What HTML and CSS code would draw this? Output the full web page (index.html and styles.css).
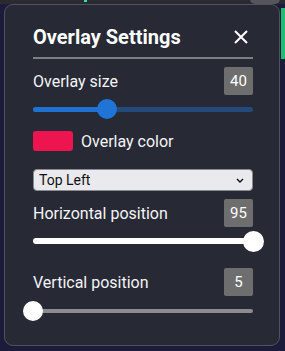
FILE: index.html
```html
<!DOCTYPE html>
<html>
<head>
<meta charset="utf-8">
<link rel="stylesheet" href="styles.css">
</head>
<body>
<div class="backdrop">
  <div class="top-strip"></div>
  <div class="top-dot"></div>
  <div class="top-pill"></div>
  <div class="side-green"></div>
</div>
<div class="panel">
  <div class="header">
    <h1 class="title">Overlay Settings</h1>
    <button class="close" aria-label="Close">
      <svg width="14" height="14" viewBox="0 0 14 14"><path d="M1 1L13 13M13 1L1 13" stroke="#fff" stroke-width="2" fill="none"/></svg>
    </button>
  </div>
  <div class="divider"></div>

  <div class="row row-first">
    <span class="label">Overlay size</span>
    <span class="badge">40</span>
  </div>
  <div class="slider slider-blue">
    <div class="track"></div>
    <div class="fill" style="width:33.6%"></div>
    <div class="thumb" style="left:33.6%"></div>
  </div>

  <div class="color-row">
    <span class="swatch"></span>
    <span class="label">Overlay color</span>
  </div>

  <div class="select">
    <span class="select-text">Top Left</span>
    <svg class="chev" width="8" height="5" viewBox="0 0 8 5"><path d="M1 1L4 4L7 1" stroke="#111" stroke-width="1.4" fill="none"/></svg>
  </div>

  <div class="row row-h">
    <span class="label">Horizontal position</span>
    <span class="badge">95</span>
  </div>
  <div class="slider slider-white">
    <div class="track"></div>
    <div class="thumb" style="left:100%"></div>
  </div>

  <div class="row row-v">
    <span class="label">Vertical position</span>
    <span class="badge">5</span>
  </div>
  <div class="slider slider-gray">
    <div class="track"></div>
    <div class="thumb" style="left:0%"></div>
  </div>
</div>
</body>
</html>
```

FILE: styles.css
```css
html, body {
  margin: 0;
  padding: 0;
}
body {
  background: #1c1b3a;
  width: 285px;
  height: 351px;
  overflow: hidden;
  position: relative;
  font-family: Roboto, "Noto Sans", Arial, sans-serif;
  color: #fff;
}
.backdrop {
  position: absolute;
  inset: 0;
}
.top-strip {
  position: absolute;
  left: 0;
  top: 0;
  width: 285px;
  height: 4px;
  background: #2a2a32;
}
.top-dot {
  position: absolute;
  left: 84px;
  top: 0;
  width: 3px;
  height: 2px;
  background: #3fe08a;
}
.top-pill {
  position: absolute;
  left: 250px;
  top: -6px;
  width: 30px;
  height: 10px;
  border-radius: 5px;
  background: #55555c;
}
.side-green {
  position: absolute;
  left: 281px;
  top: 8px;
  width: 4px;
  height: 51px;
  background: #1fbf72;
}
.panel {
  position: relative;
  margin: 4px 0 0 4px;
  width: 276px;
  height: 342px;
  box-sizing: border-box;
  background: #272935;
  border: 1px solid #50535f;
  border-radius: 9px;
  padding: 20px 26px 0 28px;
}
.header {
  display: flex;
  align-items: center;
  justify-content: space-between;
  height: 24px;
}
.title {
  margin: 0;
  font-size: 20px;
  font-weight: 700;
  line-height: 24px;
  color: #fff;
}
.close {
  background: none;
  border: 0;
  padding: 0;
  margin: 0 5px 0 0;
  width: 14px;
  height: 14px;
  display: flex;
}
.divider {
  margin-top: 8px;
  height: 2px;
  background: #7d7e84;
}
.row {
  display: flex;
  align-items: center;
  justify-content: space-between;
  height: 28px;
}
.row-first { margin-top: 8px; }
.row-h { margin-top: 8px; }
.row-v { margin-top: 17px; }
.label {
  font-size: 16px;
  color: #f4f4f6;
}
.badge {
  width: 29px;
  height: 28px;
  background: #6e6e6e;
  border-radius: 2px;
  display: flex;
  align-items: center;
  justify-content: center;
  font-size: 15px;
  color: #fff;
}
.slider {
  position: relative;
  height: 20px;
}
.slider-blue { margin-top: 4px; }
.slider-white { margin-top: 4px; }
.slider-gray { margin-top: 5px; }
.track {
  position: absolute;
  left: 0;
  right: 0;
  top: 8px;
  height: 5px;
  border-radius: 3px;
}
.fill {
  position: absolute;
  left: 0;
  top: 8px;
  height: 5px;
  border-radius: 3px;
  background: #1f72d4;
}
.thumb {
  position: absolute;
  top: 0;
  width: 20px;
  height: 20px;
  margin-left: -10px;
  border-radius: 50%;
}
.slider-blue .track { background: #244a7c; }
.slider-blue .thumb { background: #1f74d6; }
.slider-white .track { background: #ffffff; top: 7px; height: 6px; }
.slider-white .thumb { background: #ffffff; width: 21px; height: 21px; margin-left: -10px; }
.slider-gray .track { background: #8b8b90; top: 8px; height: 4px; }
.slider-gray .thumb { background: #ffffff; }
.color-row {
  display: flex;
  align-items: center;
  gap: 8px;
  margin-top: 12px;
  height: 20px;
}
.swatch {
  width: 40px;
  height: 20px;
  border-radius: 3px;
  background: #ee1450;
}
.select {
  margin-top: 18px;
  height: 22px;
  box-sizing: border-box;
  background: #e9e9ee;
  border: 1px solid #8a8a90;
  border-radius: 4px;
  display: flex;
  align-items: center;
  justify-content: space-between;
  padding: 0 8px 0 5px;
}
.select-text {
  font-family: Roboto, Arial, sans-serif;
  font-size: 14px;
  color: #111;
}
.chev { display: block; }
```
